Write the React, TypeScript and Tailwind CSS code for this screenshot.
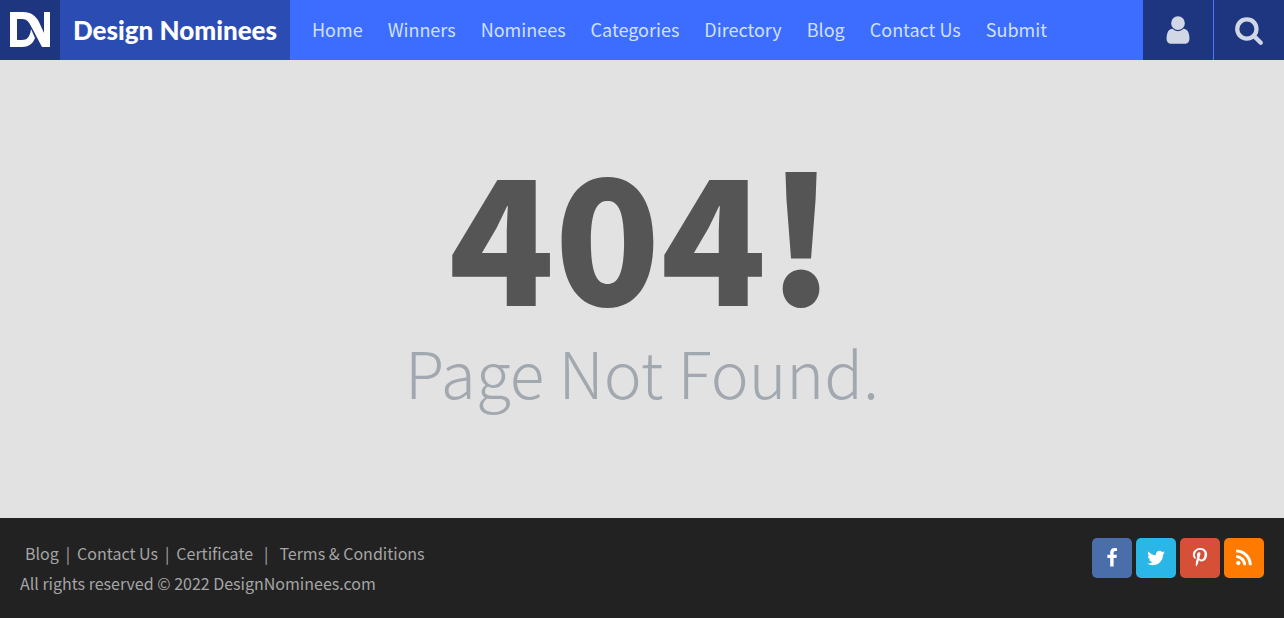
const navItems = ['Home', 'Winners', 'Nominees', 'Categories', 'Directory', 'Blog', 'Contact Us', 'Submit'];

const icons = {
  user: 'M1536 1399q0 109-62.5 187t-150.5 78h-854q-88 0-150.5-78t-62.5-187q0-85 8.5-160.5t31.5-152 58.5-131 94-89 134.5-34.5q131 128 313 128t313-128q76 0 134.5 34.5t94 89 58.5 131 31.5 152 8.5 160.5zm-256-887q0 159-112.5 271.5t-271.5 112.5-271.5-112.5-112.5-271.5 112.5-271.5 271.5-112.5 271.5 112.5 112.5 271.5z',
  search: 'M1216 832q0-185-131.5-316.5t-316.5-131.5-316.5 131.5-131.5 316.5 131.5 316.5 316.5 131.5 316.5-131.5 131.5-316.5zm512 832q0 52-38 90t-90 38q-54 0-90-38l-343-342q-179 124-399 124-143 0-273.5-55.5t-225-150-150-225-55.5-273.5 55.5-273.5 150-225 225-150 273.5-55.5 273.5 55.5 225 150 150 225 55.5 273.5q0 220-124 399l343 343q37 37 37 90z',
  facebook: 'M1343 12v264h-157q-86 0-116 36t-30 108v189h293l-39 296h-254v759h-306v-759h-255v-296h255v-218q0-186 104-288.5t277-102.5q147 0 228 12z',
  twitter: 'M1684 408q-67 98-162 167 1 14 1 42 0 130-38 259.5t-115.5 248.5-184.5 210.5-258 146-323 54.5q-271 0-496-145 35 4 78 4 225 0 401-138-105-2-188-64.5t-114-159.5q33 5 61 5 43 0 85-11-112-23-185.5-111.5t-73.5-205.5v-4q68 38 146 41-66-44-105-115t-39-154q0-88 44-163 121 149 294.5 238.5t371.5 99.5q-8-38-8-74 0-134 94.5-228.5t228.5-94.5q140 0 236 102 109-21 205-78-37 115-142 178 93-10 186-50z',
  pinterest: 'M256 597q0-108 37.5-203.5t103.5-166.5 152-123 185-78 202-26q158 0 294 66.5t221 193.5 85 287q0 96-19 188t-60 177-100 149.5-145 103-189 38.5q-68 0-135-32t-96-88q-10 39-28 112.5t-23.5 95-20.5 71-26 71-32 62.5-46 77.5-62 86.5l-14 5-9-10q-15-157-15-188 0-92 21.5-206.5t66.5-287.5 52-203q-32-65-32-169 0-83 52-156t132-73q61 0 95 40.5t34 102.5q0 66-44 191t-44 187q0 63 45 104.5t109 41.5q55 0 102-25t78.5-68 56-95 38-110.5 20-111 6.5-99.5q0-173-109.5-269.5t-285.5-96.5q-200 0-334 129.5t-134 328.5q0 44 12.5 85t27 65 27 45.5 12.5 30.5q0 28-15 73t-37 45q-2 0-17-3-51-15-90.5-56t-61-94.5-32.5-108-11-106.5z',
  rss: 'M576 1344q0 80-56 136t-136 56-136-56-56-136 56-136 136-56 136 56 56 136zm512 123q2 28-17 48-18 21-47 21h-135q-25 0-43-16.5t-20-41.5q-22-229-184.5-391.5t-391.5-184.5q-25-2-41.5-20t-16.5-43v-135q0-29 21-47 17-17 43-17h5q160 13 306 80.5t259 181.5q114 113 181.5 259t80.5 306zm512 2q2 27-18 47-18 20-46 20h-143q-26 0-44.5-17.5t-19.5-42.5q-12-215-101-408.5t-231.5-336-336-231.5-408.5-102q-25-1-42.5-19.5t-17.5-43.5v-143q0-28 20-46 18-18 44-18h3q262 13 501.5 120t425.5 294q187 186 294 425.5t120 501.5z',
};

const socials = [
  { label: 'Facebook', path: icons.facebook, color: 'bg-[#4a6ea9]' },
  { label: 'Twitter', path: icons.twitter, color: 'bg-[#2ab7e8]' },
  { label: 'Pinterest', path: icons.pinterest, color: 'bg-[#d65038]' },
  { label: 'RSS', path: icons.rss, color: 'bg-[#ff7a00]' },
];

function Icon({ path, className }: { path: string; className: string }) {
  return (
    <svg viewBox="0 0 1792 1792" fill="currentColor" aria-hidden="true" className={className}>
      <path d={path} />
    </svg>
  );
}

function Header() {
  return (
    <header className="flex h-[60px] bg-[#3d6dff]">
      <a href="#" className="flex shrink-0 text-white" aria-label="Design Nominees">
        <span className="flex w-[60px] items-center justify-center bg-[#1e367f]">
          <svg viewBox="0 0 40 36" fill="currentColor" aria-hidden="true" className="h-9 w-10">
            <path d="M0 0H13C21 0 26 4 29 10L34 21V0H40V35H32L22 16C19 10 17 7 12 7H7V35H0Z" />
            <path d="M6 28H12C17 28 20 25 21 17L25 26C23 32 18 35 12 35H6Z" />
          </svg>
        </span>
        <span className="flex w-[230px] items-center justify-center bg-[#2b4db3] font-['Lato',sans-serif] text-[26px] font-black">
          Design Nominees
        </span>
      </a>
      <nav className="flex flex-1 items-center gap-[25px] pb-0.5 pl-[22px] text-lg text-[#cfe0fb]">
        {navItems.map((item) => (
          <a key={item} href="#" className="whitespace-nowrap">{item}</a>
        ))}
      </nav>
      <div className="flex shrink-0 text-[#d2d7e5]">
        <button type="button" aria-label="Account" className="flex w-[70px] items-center justify-center bg-[#1e367f]">
          <Icon path={icons.user} className="size-8" />
        </button>
        <button type="button" aria-label="Search" className="flex w-[71px] items-center justify-center border-l border-[#4a78ff] bg-[#1e367f]">
          <Icon path={icons.search} className="size-[30px]" />
        </button>
      </div>
    </header>
  );
}

function NotFound() {
  return (
    <main className="flex flex-1 flex-col items-center bg-[#e2e2e2] pt-[70px] text-center">
      <h1 className="text-[174px] leading-[200px] font-black text-[#555]">404!</h1>
      <p className="pt-1 text-[64px] leading-[74px] font-light text-[#a2a8b0]">Page Not Found.</p>
    </main>
  );
}

function Footer() {
  return (
    <footer className="flex h-[100px] justify-between bg-[#222] p-5 text-base leading-[30px] text-[#a5a5a5]">
      <div>
        <div className="flex gap-[7px] pl-[5px]">
          <a href="#">Blog</a>
          <span>|</span>
          <a href="#">Contact Us</a>
          <span>|</span>
          <a href="#">Certificate</a>
          <span className="px-1">|</span>
          <a href="#">Terms &amp; Conditions</a>
        </div>
        <p>All rights reserved © 2022 DesignNominees.com</p>
      </div>
      <div className="flex gap-1 text-white">
        {socials.map(({ label, path, color }) => (
          <a key={label} href="#" aria-label={label} className={`flex size-10 items-center justify-center rounded-[5px] ${color}`}>
            <Icon path={path} className="size-5" />
          </a>
        ))}
      </div>
    </footer>
  );
}

export default function App() {
  return (
    <div className="flex min-h-screen flex-col font-['Noto_Sans_CJK_SC',sans-serif]">
      <Header />
      <NotFound />
      <Footer />
    </div>
  );
}
